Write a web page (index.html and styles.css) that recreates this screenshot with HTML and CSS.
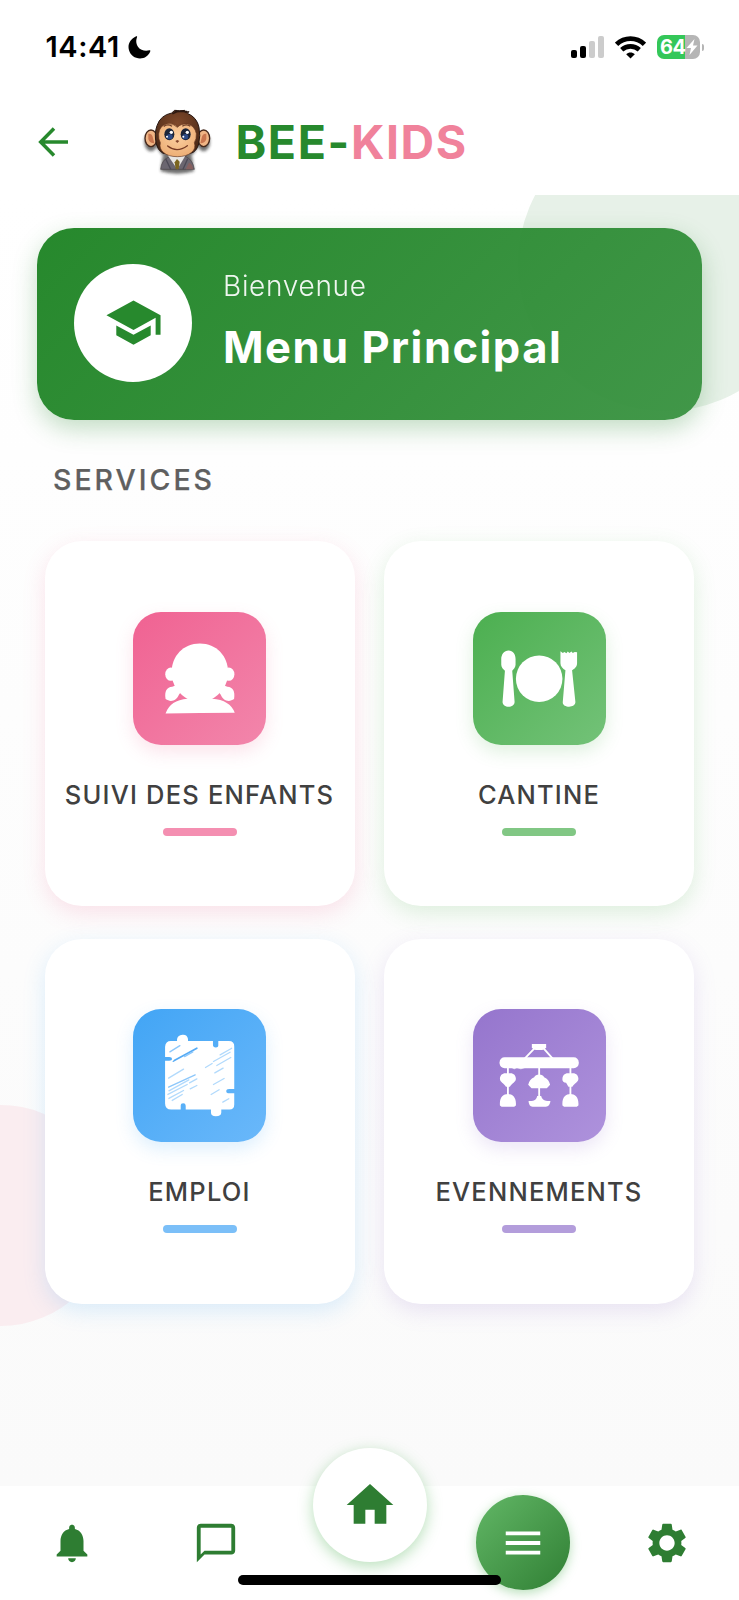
FILE: index.html
```html
<!DOCTYPE html>
<html lang="fr">
<head>
<meta charset="utf-8">
<title>Bee-Kids</title>
<link rel="stylesheet" href="styles.css">
</head>
<body>
<div class="app">
  <div class="status">
    <span class="time">14:41</span>
    <svg class="moon" width="23" height="23" viewBox="0 0 23 23"><path d="M8.200 .3C2.200 3 -.7 8.500 1 14.200c1.500 5 5.800 8.200 11 8.200 4.700 0 8.600-2.500 10.300-7.200.3-.8-.2-1.100-.9-.9-4.600.9-8.800 0-11.300-3.400C7.900 7.700 7.800 4.200 9 1.200c.3-.8 0-1.200-.8-.9z"/></svg>
    <div class="system">
      <svg width="33" height="22" viewBox="0 0 33 22"><rect x="0" y="14" width="6" height="8" rx="2"/><rect x="9" y="10" width="6" height="12" rx="2"/><rect x="18" y="5" width="6" height="17" rx="2" fill="#ccc"/><rect x="27" y="0" width="6" height="22" rx="2" fill="#ccc"/></svg>
      <svg width="31" height="23" viewBox="0 0 31 23" fill="none" stroke="#000" stroke-width="4.700"><path d="M1.600 8.300C9.500.7 21.500.7 29.400 8.300"/><path d="M6.700 13.800c5-4.500 12.600-4.500 17.600 0"/><path d="M15.500 22.600l-4.300-4.300c2.400-2.300 6.200-2.300 8.600 0z" fill="#000" stroke="none"/></svg>
      <div class="battery"><div class="cell"><span>64</span><svg width="12" height="16" viewBox="0 0 12 16"><path d="M8.500 0L.5 9h4.500L3.500 16l8-9.500H7z" fill="#fff"/></svg></div><i class="cap"></i></div>
    </div>
  </div>
  <header class="header">
    <svg class="back" width="32" height="32" viewBox="0 0 32 32" fill="none" stroke="#27892d" stroke-width="3.500"><path d="M17 2.500L3.700 16 17 29.500M4 16h27"/></svg>
    <svg class="logo" width="100" height="90" viewBox="0 0 300 270">
      <defs>
        <filter id="soft" x="-20%" y="-20%" width="140%" height="150%"><feGaussianBlur stdDeviation="5"/></filter>
        <radialGradient id="fur" cx=".5" cy=".3" r=".7"><stop offset="0" stop-color="#80492a"/><stop offset="1" stop-color="#4a2917"/></radialGradient>
        <radialGradient id="skin" cx=".5" cy=".4" r=".65"><stop offset="0" stop-color="#fbcf9f"/><stop offset="1" stop-color="#ecac73"/></radialGradient>
      </defs>
      <g filter="url(#soft)" fill="#222" opacity=".65"><ellipse cx="63" cy="126" rx="20" ry="28"/><ellipse cx="221" cy="126" rx="19" ry="28"/><ellipse cx="142" cy="120" rx="64" ry="62"/><path d="M98 168h88l6 46q-50 14-100 0z"/></g>
      <path d="M92 208q2-27 24-37l26-10 28 10q19 10 23 37z" fill="#6b6670" stroke="#4a4346" stroke-width="2"/>
      <path d="M113 166l29 42 25-42-6-6h-42z" fill="#e8e6e4"/><path d="M141 177l8 8-3 23h-9l-3-21z" fill="#7b6520"/>
      <path d="M107 176l15 32M173 176l-14 32" stroke="#4c4955" stroke-width="4"/><path d="M177 188q12 5 12 20h-22z" fill="#87605f"/>
      <g stroke="#46291c" stroke-width="4"><ellipse cx="63" cy="115" rx="18" ry="25" fill="#f0b585"/><ellipse cx="221" cy="115" rx="18" ry="25" fill="#f0b585"/></g>
      <path d="M55 101q12-1 14 13l4 16q-14 0-18-13zM229 101q-12-1-14 13l-4 16q14 0 18-13z" fill="#c9764f"/>
      <path d="M79 132q-7-31 2-55 10-31 44-38l9-8q8 0 15 2l15-2 1 5 12-1-5 5q29 12 35 42 5 25-1 50-7 25-25 28H99q-16-9-20-28z" fill="url(#fur)" stroke="#281914" stroke-width="3"/>
      <path d="M127 41q17-10 44-6M133 37q20-7 38 0" stroke="#2d1911" stroke-width="5" fill="none"/>
      <path d="M142 82q-12-13-30-11-24 5-26 31-1 16 5 26-4 18 9 29 14 13 42 13t43-13q14-12 8-29 7-11 6-27-4-23-26-29-20-2-31 10z" fill="url(#skin)" stroke="#653720" stroke-width="2"/>
      <g fill="#1b2438"><ellipse cx="118" cy="103" rx="15" ry="18"/><ellipse cx="167" cy="103" rx="15" ry="18"/></g>
      <g fill="#2c4a86"><ellipse cx="119" cy="110" rx="9" ry="8"/><ellipse cx="166" cy="110" rx="9" ry="8"/></g>
      <g fill="#fff"><circle cx="124" cy="97" r="5"/><circle cx="172" cy="97" r="5"/><circle cx="111" cy="110" r="3"/><circle cx="160" cy="110" r="3"/></g>
      <path d="M101 79q13-9 25 0M157 79q12-9 24 0" fill="none" stroke="#693c26" stroke-width="4"/>
      <path d="M136 123l6-3 6 3-6 6z" fill="#84462d"/><path d="M113 138q28 22 59-1" fill="none" stroke="#763a23" stroke-width="4" stroke-linecap="round"/>
    </svg>
    <h1 class="brand">BEE-<span>KIDS</span></h1>
  </header>
  <main class="content">
    <i class="blob green"></i><i class="blob rose"></i>
    <section class="banner">
      <div class="badge"><svg width="59" height="59" viewBox="0 0 24 24" fill="#27892d"><path d="M5 13.180v4L12 21l7-3.820v-4L12 17l-7-3.820zM12 3L1 9l11 6 9-4.910V17h2V9L12 3z"/></svg></div>
      <div class="welcome"><p>Bienvenue</p><h2>Menu Principal</h2></div>
    </section>
    <h3 class="heading">SERVICES</h3>
    <div class="grid">
      <article class="card pink">
        <div class="tile"><svg width="133" height="133" viewBox="0 0 400 400" fill="#fff"><path d="M201 95c50 0 85 38 85 87 0 37-22 66-52 82h-66c-30-16-52-45-52-82 0-49 35-87 85-87z"/><ellipse cx="114" cy="187" rx="17" ry="20"/><ellipse cx="288" cy="187" rx="17" ry="20"/><path d="M98 262c-4-24 4-36 20-37l16-6 14 16-10 14c-6 17-24 24-40 13zM304 262c4-24-4-36-20-37l-16-6-14 16 10 14c6 17 24 24 40 13z"/><path d="M98 305q14-40 66-44h74q54 4 68 42-104 0-208 2z"/></svg></div>
        <h4>SUIVI DES ENFANTS</h4><i class="bar"></i>
      </article>
      <article class="card green-card">
        <div class="tile"><svg width="133" height="133" viewBox="0 0 400 400" fill="#fff"><circle cx="199" cy="201" r="70"/><path d="M107 116c14 0 22 13 21 29v14c0 8-6 14-10 18l7 92c1 10-8 16-18 16s-19-6-18-16l7-92c-5-4-11-10-11-18v-14c-1-16 8-29 22-29zM263 118l7 5 5-3 6 4 4-5 5 4 6-4 4 4 6-3 7 1v33c0 11-8 17-15 21l10 96c0 9-9 14-19 14s-20-5-19-14l8-96c-8-5-15-11-15-21z"/></svg></div>
        <h4>CANTINE</h4><i class="bar"></i>
      </article>
      <article class="card blue">
        <div class="tile"><svg width="133" height="133" viewBox="0 0 400 400"><defs><filter id="chalk"><feGaussianBlur stdDeviation="1.200"/></filter><clipPath id="puzzle"><path id="piece" d="M114 99h21V91q2-10 14-11t14 11v8h75v9q0 10 11 10t10-10v-9h29q15 0 14 14v125h-13q-11 0-11 9t11 9h13v31q0 13-12 13h-27v11q0 9-14 9-12 0-12-9v-11h-76v-9q0-10-10-10t-10 10v9h-26q-16 0-16-16V158h10q11 0 11-8t-11-8h-10v-28q1-15 15-15z"/></clipPath></defs><use href="#piece" fill="#fff"/><g clip-path="url(#puzzle)"><g filter="url(#chalk)" fill="none" stroke-linecap="round"><path stroke="#55abf5" stroke-width="5" d="M120 157l72-39"/><path stroke="#8cc7fb" stroke-width="4" d="M107 235l80-37M111 129l30-19M155 143l25-14"/><path stroke="#b2dafc" stroke-width="4" d="M107 208l45-27M108 246l60-33M105 257l58-30M108 269l44-24M118 275l30-18M170 222l22-12M262 138l35-20M242 158l50-28M252 170l42-24M218 176l20-12M246 192l25-14M242 227l32-18M235 257l24-14M270 280l18-10M172 240l20-10"/></g></g><use href="#piece" fill="none" stroke="#fff" stroke-width="5"/></svg></div>
        <h4>EMPLOI</h4><i class="bar"></i>
      </article>
      <article class="card purple">
        <div class="tile"><svg width="133" height="133" viewBox="0 0 400 400" fill="#fff"><path d="M177 105h43v11q-4 7-12 7h-19q-9 0-12-7z"/><path d="M184 119l-30 32M213 119l28 32M105 170v92M199 170v105M293 170v92" fill="none" stroke="#fff" stroke-width="5.500"/><rect x="80" y="145" width="238" height="33" rx="15"/><path d="M117 178l7 3 8-3 12 3 12-3z"/><path d="M105 194c15-4 24 4 24 16 0 10-12 14-18 24h-12c-6-10-18-14-18-24 0-12 9-20 24-16zM293 194c15-4 24 4 24 16 0 10-12 14-18 24h-12l-7-12c-8-1-12-6-11-12 0-12 9-20 24-16zM184 205q4-8 15-8t15 8q15 7 18 23l-10 10h-46l-10-10q3-16 18-23zM81 290c-2-24 10-34 24-34s26 10 24 34l-5 4H86zM269 290c-2-24 10-34 24-34s26 10 24 34l-5 4h-38zM193 262h12q3 14 18 15h10q-2 17-14 17h-40q-11 0-12-17h10q14-2 16-15z"/></svg></div>
        <h4>EVENNEMENTS</h4><i class="bar"></i>
      </article>
    </div>
  </main>
  <nav class="nav">
    <svg width="46" height="46" viewBox="0 0 24 24"><path d="M12 22c1.100 0 2-.9 2-2h-4c0 1.100.89 2 2 2zm6-6v-5c0-3.070-1.640-5.640-4.500-6.320V4c0-.83-.67-1.500-1.500-1.500s-1.500.67-1.500 1.500v.68C7.630 5.360 6 7.920 6 11v5l-2 2v1h16v-1l-2-2z"/></svg>
    <svg width="46" height="46" viewBox="0 0 24 24"><path d="M20 2H4c-1.100 0-2 .9-2 2v18l4-4h14c1.100 0 2-.9 2-2V4c0-1.100-.9-2-2-2zm0 14H6l-2 2V4h16v12z"/></svg>
    <div class="home"><svg width="56" height="56" viewBox="0 0 24 24"><path d="M10 20v-6h4v6h5v-8h3L12 3 2 12h3v8z"/></svg></div>
    <div class="menu"><svg width="46" height="46" viewBox="0 0 24 24"><path d="M3 18h18v-2H3v2zm0-5h18v-2H3v2zm0-7v2h18V6H3z" fill="#fff"/></svg></div>
    <svg width="46" height="46" viewBox="0 0 24 24"><path d="M19.430 12.980c.04-.32.070-.64.070-.98s-.03-.66-.07-.98l2.110-1.650c.19-.15.240-.42.120-.64l-2-3.460c-.12-.22-.39-.3-.61-.22l-2.490 1c-.52-.4-1.080-.73-1.690-.98l-.38-2.650C14.460 2.180 14.250 2 14 2h-4c-.25 0-.46.18-.49.42l-.38 2.650c-.61.25-1.170.59-1.690.98l-2.490-1c-.23-.09-.49 0-.61.22l-2 3.460c-.13.22-.07.49.12.64l2.110 1.650c-.04.320-.07.650-.07.980s.03.660.07.980l-2.110 1.650c-.19.150-.24.420-.12.640l2 3.460c.12.220.39.300.61.220l2.490-1c.52.400 1.080.73 1.690.98l.38 2.650c.03.240.24.420.49.420h4c.25 0 .46-.18.490-.42l.38-2.650c.61-.25 1.170-.59 1.690-.98l2.490 1c.23.090.49 0 .61-.22l2-3.460c.12-.22.070-.49-.12-.64l-2.110-1.650zM12 16c-2.200 0-4-1.800-4-4s1.800-4 4-4 4 1.800 4 4-1.800 4-4 4z"/></svg>
    <i class="indicator"></i>
  </nav>
</div>
</body>
</html>
```
FILE: styles.css
```css
* { box-sizing: border-box; margin: 0; padding: 0; }
body { font-family: Inter, "Liberation Sans", sans-serif; background: #fff; }
svg { display: block; flex: none; }
.app { width: 739px; height: 1600px; display: flex; flex-direction: column; overflow: hidden; }
.status { height: 95px; flex: none; display: flex; align-items: center; padding: 0 35px 0 45.500px; }
.time { font-size: 29px; font-weight: 600; line-height: 36px; letter-spacing: .6px; width: 82px; white-space: nowrap; margin-top: -1px; }
.moon { margin-top: -1px; }
.system { margin-left: auto; display: flex; align-items: center; gap: 11px; margin-top: -1px; }
.battery { display: flex; align-items: center; gap: 2px; }
.cell { width: 43px; height: 24px; border-radius: 7px; background: linear-gradient(90deg, #34c759 65%, #b5b5b5 65%); display: flex; align-items: center; padding-left: 3px; color: #fff; }
.cell span { font-size: 20px; line-height: 24px; font-weight: 700; letter-spacing: -.6px; width: 26px; }
.cap { width: 2px; height: 7px; border-radius: 0 3px 3px 0; background: #b5b5b5; }
.header { height: 100px; flex: none; display: flex; align-items: center; padding: 0 0 5px 37px; }
.back { margin-top: -1px; }
.logo { margin-left: 61px; margin-top: 5px; }
.brand { margin-left: 5.500px; margin-top: -2px; font-size: 46.500px; line-height: 56px; font-weight: 700; letter-spacing: 1.600px; color: #27892d; white-space: nowrap; }
.brand span { color: #f0829b; }
.content { position: relative; height: 1291px; flex: none; padding: 32.500px 37px 0; background: linear-gradient(#fff, #fafafa); overflow: hidden; }
.blob { position: absolute; border-radius: 50%; }
.green { width: 294px; height: 294px; left: 518px; top: -78px; background: #e7f1e8; }
.rose { width: 221px; height: 221px; left: -110px; top: 910px; background: #faedf0; }
.banner { position: relative; height: 192px; border-radius: 37px; padding: 0 37px; display: flex; align-items: center; background: linear-gradient(135deg, rgba(34,134,40,.98), rgba(56,146,64,.95)); box-shadow: 0 9px 24px rgba(39,137,45,.28); }
.badge { width: 118px; height: 118px; margin-top: -2px; border-radius: 50%; background: #fff; display: grid; place-items: center; }
.welcome { margin-left: 31px; margin-top: -5px; color: #fff; white-space: nowrap; }
.welcome p { font-size: 28px; line-height: 34px; font-weight: 300; letter-spacing: .7px; opacity: .92; margin-bottom: 17px; }
.welcome h2 { font-size: 43.500px; line-height: 54px; font-weight: 700; letter-spacing: 1.500px; }
.heading { position: relative; margin: 42.500px 0 43px 16px; font-size: 28.500px; line-height: 36px; font-weight: 500; letter-spacing: 3px; color: #5f5f5f; -webkit-text-stroke: .25px #5f5f5f; }
.grid { position: relative; display: grid; grid-template-columns: 310px 310px; grid-auto-rows: 365px; gap: 32.500px 29.500px; padding: 0 7.500px; }
.card { background: #fff; border-radius: 37px; display: flex; flex-direction: column; align-items: center; padding-top: 70.500px; box-shadow: 0 7px 22px var(--glow); }
.tile { width: 133px; height: 133px; border-radius: 28px; background: linear-gradient(135deg, var(--from), var(--to)); box-shadow: 0 7px 18px var(--glow); }
.card h4 { margin-top: 34px; line-height: 32px; font-size: 25.500px; font-weight: 500; letter-spacing: 1.200px; color: #404040; white-space: nowrap; }
.bar { width: 74px; height: 8px; border-radius: 4px; background: var(--line); margin-top: 17px; }
.pink { --from: #f06292; --to: #f286ab; --line: #f48fb1; --glow: rgba(240,98,146,.18); }
.green-card { --from: #4caf50; --to: #73c278; --line: #81c784; --glow: rgba(76,175,80,.18); }
.blue { --from: #42a5f5; --to: #6ab8fa; --line: #7bbff8; --glow: rgba(66,165,245,.18); }
.purple { --from: #9575cd; --to: #ae92dc; --line: #b39ddb; --glow: rgba(149,117,205,.18); }
.nav { position: relative; height: 114px; flex: none; background: #fff; display: grid; grid-template-columns: 144px 144px 163px 144px 144px; justify-items: center; align-items: center; fill: #2e7d32; }
.home { width: 114px; height: 114px; border-radius: 50%; background: #fff; display: grid; place-items: center; margin-top: -76px; box-shadow: 0 4px 15px rgba(76,175,80,.4); }
.menu { width: 94.500px; height: 94.500px; border-radius: 50%; background: linear-gradient(135deg, #62b766, #307f34); display: grid; place-items: center; margin-top: -1px; box-shadow: 0 3px 11px rgba(76,175,80,.4); }
.indicator { position: absolute; left: 238px; top: 89px; width: 263px; height: 10px; border-radius: 5px; background: #000; }
```
